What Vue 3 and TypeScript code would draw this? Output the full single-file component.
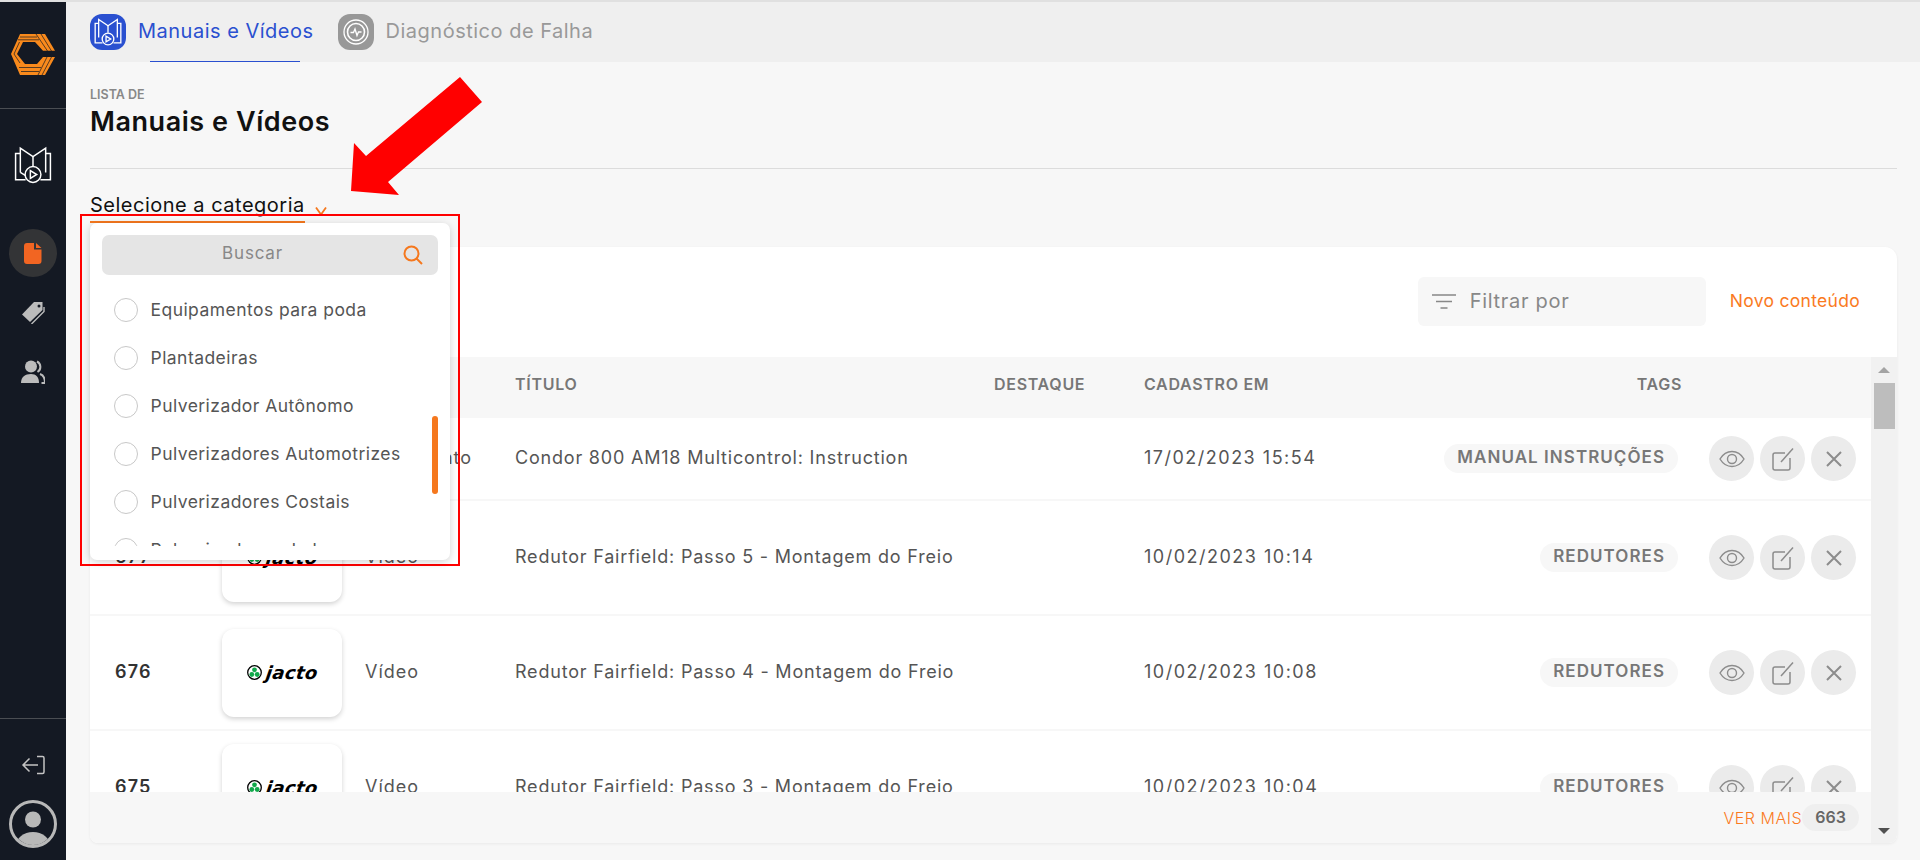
<script setup lang="ts">
interface Row { id: string; thumb: boolean; type: string; title: string; date: string; tag: string; compact?: boolean }
const rows: Row[] = [
  { id: '678', thumb: false, type: 'Documento', title: 'Condor 800 AM18 Multicontrol: Instruction', date: '17/02/2023 15:54', tag: 'MANUAL INSTRUÇÕES', compact: true },
  { id: '677', thumb: true, type: 'Vídeo', title: 'Redutor Fairfield: Passo 5 - Montagem do Freio', date: '10/02/2023 10:14', tag: 'REDUTORES' },
  { id: '676', thumb: true, type: 'Vídeo', title: 'Redutor Fairfield: Passo 4 - Montagem do Freio', date: '10/02/2023 10:08', tag: 'REDUTORES' },
  { id: '675', thumb: true, type: 'Vídeo', title: 'Redutor Fairfield: Passo 3 - Montagem do Freio', date: '10/02/2023 10:04', tag: 'REDUTORES' },
]
const categories: string[] = ['Equipamentos para poda', 'Plantadeiras', 'Pulverizador Autônomo', 'Pulverizadores Automotrizes', 'Pulverizadores Costais', 'Pulverizadores de barras']
</script>

<template>
  <div class="app">
    <aside class="sidebar">
      <div class="side-logo">
        <svg width="44" height="43" viewBox="0 0 44 43">
          <path d="M0 21L9 1H34L44 17.700H32L24 9H12L6 21L14 31H26L32 24H44L34 42H9Z" fill="#f98a1c" />
          <path d="M9 4H26M7 6.800H28M25 1L36.500 18M30 1L40.500 18M8.500 9L3 21L9 30M8 34.500H30M10 38.500H28M36 24L27 42M40.500 24L31 42" stroke="#141923" stroke-width="0.700" fill="none" />
        </svg>
      </div>
      <div class="side-rule"></div>
      <div class="side-book">
        <svg class="block" width="38" height="38" viewBox="0 0 36 36" fill="none" stroke="#fff" stroke-width="1.400">
          <path d="M6 7H1.500V32H11M30 7H34.500V32H25" />
          <path d="M6 25V2L18 10L30 2V25" />
          <path d="M18 10V19M6 25L11 28" />
          <circle cx="18" cy="27" r="7.500" />
          <path d="M15.500 23.300V30.700L21.500 27Z" />
        </svg>
      </div>
      <div class="side-nav">
        <div class="nav-active">
          <svg width="18" height="21" viewBox="0 0 18 21"><path d="M3 0H10V6.500H17.500V18A3 3 0 0 1 14.500 21H3A3 3 0 0 1 0 18V3A3 3 0 0 1 3 0ZM12 0L17.500 5H12Z" fill="#f26522" /></svg>
        </div>
        <div class="nav-item">
          <svg width="24" height="23" viewBox="0 0 24 23"><path d="M13 1H21.500V9L9 21L1 13.500Z" fill="#bcbcbc" /><circle cx="18" cy="5" r="1.500" fill="#141923" /><path d="M23 6V10.500L10.500 23" stroke="#bcbcbc" stroke-width="1.400" fill="none" /></svg>
        </div>
        <div class="nav-item">
          <svg width="24" height="24" viewBox="0 0 24 24"><circle cx="10" cy="6.500" r="6" fill="#bcbcbc" /><path d="M0 23C0 17 4 14 10 14C15 14 18 17 18 23Z" fill="#bcbcbc" /><path d="M16 1.500A6 6 0 0 1 16.500 12M19 14C22 15 24 18 24 23H20.500" stroke="#bcbcbc" stroke-width="2" fill="none" /></svg>
        </div>
      </div>
      <div class="side-foot">
        <div class="side-rule"></div>
        <div class="side-logout">
          <svg class="block" width="24" height="20" viewBox="0 0 24 20" fill="none" stroke="#c4c4c4" stroke-width="1.500"><path d="M16 1.500H21.500A1.500 1.500 0 0 1 23 3V17A1.500 1.500 0 0 1 21.500 18.500H16M17 10H2M8.500 3.500L2 10L8.500 16.500" /></svg>
        </div>
        <div class="side-avatar">
          <svg class="block" width="48" height="48" viewBox="0 0 48 48"><defs><clipPath id="av"><circle cx="24" cy="24" r="21" /></clipPath></defs><circle cx="24" cy="24" r="22.500" fill="none" stroke="#b8b8b8" stroke-width="3" /><circle cx="24" cy="19.500" r="8" fill="#b8b8b8" /><ellipse cx="24" cy="46" rx="17" ry="14" fill="#b8b8b8" clip-path="url(#av)" /></svg>
        </div>
      </div>
    </aside>

    <main class="main">
      <nav class="tabs">
        <div class="tab tab-on">
          <span class="tab-icon blue">
            <svg width="28" height="28" viewBox="0 0 36 36" fill="none" stroke="#fff" stroke-width="1.700"><path d="M6 7H1.500V32H11M30 7H34.500V32H25" /><path d="M6 25V2L18 10L30 2V25" /><path d="M18 10V19" /><circle cx="18" cy="27" r="7.500" /><path d="M15.500 23.300V30.700L21.500 27Z" /></svg>
          </span>
          <span class="tab-label">Manuais e Vídeos</span>
        </div>
        <div class="tab">
          <span class="tab-icon grey">
            <svg width="26" height="26" viewBox="0 0 26 26" fill="none" stroke="#fff" stroke-width="1.300"><circle cx="13" cy="13" r="12" /><circle cx="13" cy="13" r="8.500" stroke-width="1.600" /><path d="M7.500 13.500H10.500L12 10L14 16.500L15.500 13H18.500" /></svg>
          </span>
          <span class="tab-label">Diagnóstico de Falha</span>
        </div>
      </nav>

      <section class="content">
        <header class="page-head">
          <div class="eyebrow">LISTA DE</div>
          <h1 class="page-title">Manuais e Vídeos</h1>
        </header>

        <div class="select-wrap">
          <div class="select-line">
            <span class="select-label">Selecione a categoria</span>
            <span class="select-chevron">
              <svg class="block" width="12" height="8" viewBox="0 0 12 8" fill="none" stroke="#f5781e" stroke-width="1.800"><path d="M1 0.500L6 7.500L11 0.500" /></svg>
            </span>
          </div>
          <div class="dropdown">
            <div class="search">
              <span class="search-text">Buscar</span>
              <svg class="search-icon" width="20" height="20" viewBox="0 0 20 20" fill="none" stroke="#f5781e" stroke-width="2"><circle cx="8.500" cy="8.500" r="7" /><path d="M13.500 13.500L19 19" /></svg>
            </div>
            <ul class="cat-list">
              <li v-for="c in categories" :key="c" class="cat-item">
                <span class="radio"></span>
                <span class="cat-name">{{ c }}</span>
              </li>
              <li class="cat-thumb"></li>
            </ul>
          </div>
        </div>

        <div class="card">
          <div class="toolbar">
            <div class="filter">
              <svg width="24" height="15" viewBox="0 0 24 15" fill="none" stroke="#888" stroke-width="1.500"><path d="M0 1H24M4 7.500H20M8.500 14H15.500" /></svg>
              <span>Filtrar por</span>
            </div>
            <span class="new-link">Novo conteúdo</span>
          </div>

          <div class="table-area">
            <div class="table-col">
              <div class="thead grid">
                <span></span><span></span><span></span>
                <span>TÍTULO</span>
                <span>DESTAQUE</span>
                <span>CADASTRO EM</span>
                <span class="th-tags">TAGS</span>
                <span></span>
              </div>
              <div class="tbody">
                <div v-for="r in rows" :key="r.id" class="grid row" :class="{ compact: r.compact }">
                  <span class="cell-id">{{ r.id }}</span>
                  <span>
                    <span v-if="r.thumb" class="thumb">
                      <svg width="15" height="15" viewBox="0 0 15 15"><circle cx="7.500" cy="7.500" r="6.800" fill="#fff" stroke="#000" stroke-width="1.300" /><circle cx="7.500" cy="4.800" r="2.400" fill="#10a84a" /><circle cx="4.800" cy="9.500" r="2.400" fill="#10a84a" /><circle cx="10.200" cy="9.500" r="2.400" fill="#10a84a" /></svg>
                      <span class="jacto">jacto</span>
                    </span>
                  </span>
                  <span class="cell-text wide">{{ r.type }}</span>
                  <span class="cell-text">{{ r.title }}</span>
                  <span></span>
                  <span class="cell-text date">{{ r.date }}</span>
                  <span class="cell-tag"><span class="pill">{{ r.tag }}</span></span>
                  <span class="actions">
                    <span class="act">
                      <svg width="26" height="18" viewBox="0 0 26 18" fill="none" stroke="#8c8c8c" stroke-width="1.400"><path d="M1 9C4 4 8 1.500 13 1.500S22 4 25 9C22 14 18 16.500 13 16.500S4 14 1 9Z" /><circle cx="13" cy="9" r="4.500" /></svg>
                    </span>
                    <span class="act">
                      <svg width="22" height="24" viewBox="0 0 22 24" fill="none" stroke="#8c8c8c" stroke-width="1.500"><path d="M13 6H3A2 2 0 0 0 1 8V21A2 2 0 0 0 3 23H16A2 2 0 0 0 18 21V11" /><path d="M9 15L21 1.500" /></svg>
                    </span>
                    <span class="act">
                      <svg width="16" height="16" viewBox="0 0 16 16" fill="none" stroke="#8c8c8c" stroke-width="2"><path d="M1 1L15 15M15 1L1 15" /></svg>
                    </span>
                  </span>
                </div>
              </div>
              <div class="table-foot">
                <span class="more">VER MAIS</span>
                <span class="count">663</span>
              </div>
            </div>
            <div class="scrollbar">
              <span class="arrow-up"></span>
              <span class="scroll-thumb"></span>
              <span class="scroll-gap"></span>
              <span class="arrow-down"></span>
            </div>
          </div>
        </div>
      </section>
    </main>

    <svg class="annotation" width="1920" height="860" viewBox="0 0 1920 860">
      <polygon points="460,77 482,102 388,182 399,195 351,191 354,143 366,156" fill="#ff0000" />
      <rect x="81" y="215" width="378" height="350" fill="none" stroke="#ff0000" stroke-width="2" />
    </svg>
  </div>
</template>

<style>
html, body { margin: 0; padding: 0; background: #f7f7f7; }
</style>

<style scoped>
.app {
  position: relative;
  display: flex;
  height: 858px;
  border-top: 2px solid #e0e0e0;
  overflow: hidden;
  font-family: Inter, "Noto Sans", sans-serif;
  color: #555;
}
.block { display: block; }
.annotation { position: absolute; left: 0; top: -2px; pointer-events: none; }

.sidebar { width: 66px; flex: none; background: #141923; display: flex; flex-direction: column; align-items: center; }
.side-logo { height: 106px; box-sizing: border-box; padding-top: 31px; align-self: stretch; display: flex; justify-content: center; }
.side-rule { height: 1px; width: 100%; background: #4a4d52; align-self: stretch; }
.side-book { margin-top: 37px; height: 38px; }
.side-nav { margin-top: 45px; display: flex; flex-direction: column; align-items: center; width: 100%; }
.nav-active { width: 48px; height: 48px; border-radius: 50%; background: #333436; display: flex; align-items: center; justify-content: center; }
.nav-item { margin-top: 23px; height: 24px; display: flex; align-items: center; justify-content: center; }
.nav-item + .nav-item { margin-top: 36px; }
.side-foot { margin-top: auto; width: 100%; display: flex; flex-direction: column; align-items: center; padding-bottom: 12px; }
.side-logout { margin-top: 36px; height: 20px; }
.side-avatar { margin-top: 25px; height: 48px; }

.main { flex: 1; min-width: 0; display: flex; flex-direction: column; background: #f7f7f7; }
.tabs { height: 60px; flex: none; background: #efefef; display: flex; padding-left: 24px; gap: 24px; }
.tab { position: relative; display: flex; align-items: flex-start; padding-top: 12px; gap: 12px; }
.tab-on::after { content: ""; position: absolute; left: 60px; width: 150px; bottom: 0; height: 1px; background: #2a50d0; }
.tab-icon { width: 36px; height: 36px; border-radius: 12px; display: flex; align-items: center; justify-content: center; }
.tab-icon.blue { background: #2a50d0; }
.tab-icon.grey { background: #989898; }
.tab-label { font-size: 20px; line-height: 28px; margin-top: 3px; color: #999; letter-spacing: 0.5px; }
.tab-on .tab-label { color: #2a50d0; }

.content { flex: 1; min-height: 0; padding: 0 23px 0 24px; display: flex; flex-direction: column; }
.page-head { height: 107px; box-sizing: border-box; padding-top: 26px; border-bottom: 1px solid #dcdcdc; }
.eyebrow { font-size: 12.500px; font-weight: 600; line-height: 14px; color: #888; }
.page-title { margin: 3px 0 0; font-size: 27px; line-height: 34px; font-weight: 600; color: #111; letter-spacing: 0.55px; }

.select-wrap { position: relative; height: 78px; flex: none; }
.select-line { display: flex; align-items: flex-start; height: 52px; padding-top: 21px; box-sizing: border-box; }
.select-label { font-size: 20px; line-height: 30px; height: 31px; color: #111; border-bottom: 2px solid #f5781e; box-sizing: content-box; letter-spacing: 0.5px; }
.select-chevron { margin: 17px 0 0 10px; height: 8px; display: block; }
.dropdown { position: absolute; z-index: 5; left: 0; top: 54px; width: 360px; height: 337px; box-sizing: border-box; padding: 12px; background: #fff; border-radius: 7px; box-shadow: 0 2px 8px rgba(0, 0, 0, 0.18); }
.search { position: relative; height: 40px; background: #e5e5e5; border-radius: 7px; display: flex; align-items: center; justify-content: center; }
.search-text { font-size: 17px; color: #888; margin-top: -5px; margin-right: 35px; letter-spacing: 0.8px; }
.search-icon { position: absolute; right: 15px; top: 10px; }
.cat-list { position: relative; list-style: none; margin: 11px 0 0; padding: 0; height: 260px; overflow: hidden; }
.cat-item { height: 48px; display: flex; align-items: center; gap: 12.500px; padding-left: 12px; font-size: 17.500px; color: #555; letter-spacing: 0.45px; }
.cat-name { margin-top: -2px; }
.radio { width: 24px; height: 24px; box-sizing: border-box; border: 1px solid #c8c8c8; border-radius: 50%; flex: none; }
.cat-thumb { position: absolute; right: 0; top: 130px; width: 6px; height: 78px; border-radius: 3px; background: #f5781e; }

.card { height: 596px; flex: none; background: #fff; border-radius: 12px 12px 8px 8px; display: flex; flex-direction: column; overflow: hidden; box-shadow: 0 1px 3px rgba(0, 0, 0, 0.06); }
.toolbar { height: 110px; flex: none; box-sizing: border-box; display: flex; align-items: flex-start; justify-content: flex-end; padding: 30px 37px 0 0; }
.filter { width: 288px; height: 49px; box-sizing: border-box; padding-left: 14px; background: #f7f7f7; border-radius: 6px; display: flex; align-items: center; gap: 14px; font-size: 20px; color: #888; letter-spacing: 0.7px; }
.filter span { margin-top: -2px; }
.new-link { margin-left: 24px; margin-top: 13px; font-size: 17.500px; color: #fa7a1e; line-height: 22px; letter-spacing: 0.3px; }

.table-area { flex: 1; min-height: 0; display: flex; }
.table-col { flex: 1; min-width: 0; display: flex; flex-direction: column; }
.grid { display: grid; grid-template-columns: 107px 143px 150px 479px 150px 230px 304px 193px; padding-left: 25px; align-items: center; }
.thead { height: 61px; flex: none; box-sizing: border-box; padding-bottom: 7px; background: #f7f7f7; font-size: 16px; font-weight: 600; color: #777; letter-spacing: 0.7px; }
.th-tags { text-align: right; margin-right: -4px; }
.tbody { flex: 1; min-height: 0; overflow: hidden; }
.row { height: 115px; box-sizing: border-box; border-bottom: 2px solid #f7f7f7; font-size: 18px; }
.row.compact { height: 83px; }
.cell-id { font-weight: 600; color: #333; font-size: 18px; letter-spacing: 1.200px; margin-top: -3px; }
.cell-text { color: #555; white-space: nowrap; letter-spacing: 0.8px; margin-top: -3px; }
.cell-text.wide { letter-spacing: 1px; }
.cell-text.date { letter-spacing: 1.500px; }
.thumb { width: 120px; height: 88px; border-radius: 12px; background: #fff; box-shadow: 0 2px 5px rgba(0, 0, 0, 0.18); display: flex; align-items: center; justify-content: center; gap: 4px; }
.jacto { display: block; font-family: "DejaVu Sans", sans-serif; font-style: italic; font-weight: 700; font-size: 18px; line-height: 18px; color: #000; letter-spacing: 0.4px; transform: skewX(-8deg); }
.cell-tag { display: flex; justify-content: flex-end; }
.pill { height: 29px; line-height: 27px; padding: 0 13px; border-radius: 15px; background: #f7f7f7; font-size: 17px; font-weight: 600; color: #777; white-space: nowrap; letter-spacing: 1.050px; }
.actions { display: flex; gap: 6px; padding-left: 31px; }
.act { width: 45px; height: 45px; border-radius: 50%; background: #ebebeb; display: flex; align-items: center; justify-content: center; }
.table-foot { height: 51px; flex: none; background: #f7f7f7; display: flex; align-items: center; justify-content: flex-end; padding-right: 12px; }
.more { font-size: 16px; color: #fa7a1e; font-weight: 300; letter-spacing: 0.5px; }
.count { width: 57px; height: 27px; line-height: 27px; border-radius: 14px; background: #efefef; text-align: center; font-size: 16px; font-weight: 600; color: #666; }

.scrollbar { width: 26px; flex: none; background: #f1f1f1; display: flex; flex-direction: column; align-items: center; padding: 10px 0 9px; box-sizing: border-box; margin-right: 0; }
.arrow-up { width: 0; height: 0; border-left: 6px solid transparent; border-right: 6px solid transparent; border-bottom: 6px solid #a3a3a3; }
.scroll-thumb { width: 21px; height: 46px; margin-top: 10px; background: #bdbdbd; }
.scroll-gap { flex: 1; }
.arrow-down { width: 0; height: 0; border-left: 6px solid transparent; border-right: 6px solid transparent; border-top: 6px solid #505050; }
</style>
